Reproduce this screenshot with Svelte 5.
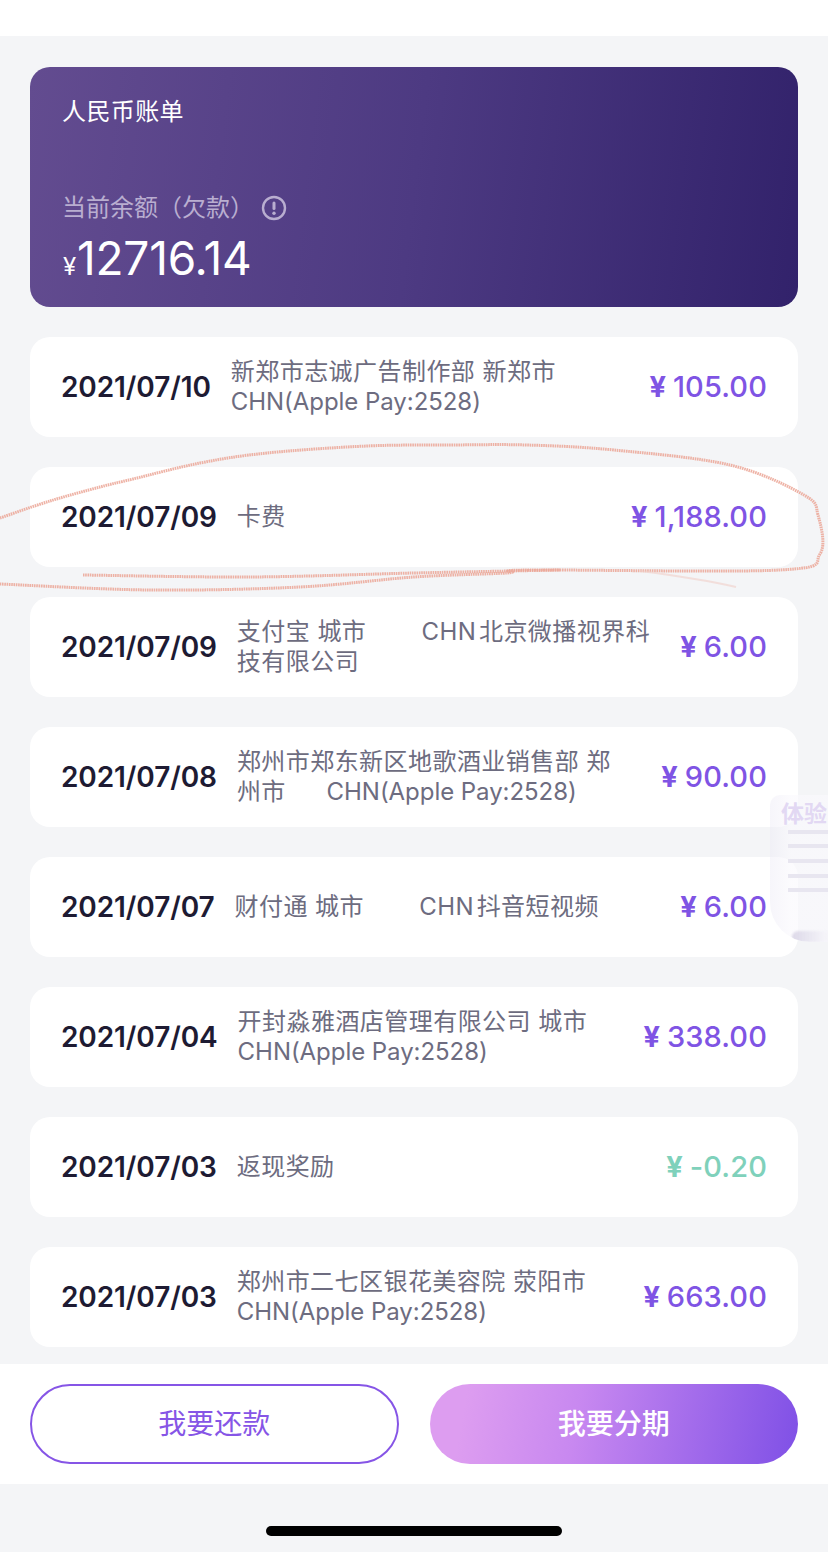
<script>
  const card = 'CHN(Apple Pay:2528)';
  const rows = [
    { date: '2021/07/10', lines: ['新郑市志诚广告制作部 新郑市', ''], card, amount: '105.00' },
    { date: '2021/07/09', lines: ['卡费'], amount: '1,188.00' },
    { date: '2021/07/09', lines: ['支付宝 城市       \u2009CHN\u200a北京微播视界科', '技有限公司'], amount: '6.00' },
    { date: '2021/07/08', lines: ['郑州市郑东新区地歌酒业销售部 郑', '州市     \u2009'], card, amount: '90.00' },
    { date: '2021/07/07', lines: ['财付通 城市       \u2009CHN\u200a抖音短视频'], amount: '6.00' },
    { date: '2021/07/04', lines: ['开封淼雅酒店管理有限公司 城市', ''], card, amount: '338.00' },
    { date: '2021/07/03', lines: ['返现奖励'], amount: '-0.20', refund: true },
    { date: '2021/07/03', lines: ['郑州市二七区银花美容院 荥阳市', ''], card, amount: '663.00' }
  ];

  // points of the pen stroke, read off the picture
  const ring = [
    [0, 88], [50, 71], [100, 57], [133, 49], [200, 33], [267, 23], [367, 16], [450, 15], [527, 15], [614, 20],
    [730, 35], [804, 65], [818, 85], [820, 124], [780, 140], [530, 140], [507, 143], [414, 147],
    [300, 157], [150, 160], [0, 154]
  ];
  const under = [[83, 145], [250, 147], [414, 143], [510, 141], [560, 140]];

  function smooth(pts) {
    let d = `M${pts[0][0]} ${pts[0][1]}`;
    for (let i = 0; i < pts.length - 1; i++) {
      const p0 = pts[i - 1] || pts[i];
      const p1 = pts[i];
      const p2 = pts[i + 1];
      const p3 = pts[i + 2] || p2;
      const c1x = p1[0] + (p2[0] - p0[0]) / 6;
      const c1y = p1[1] + (p2[1] - p0[1]) / 6;
      const c2x = p2[0] - (p3[0] - p1[0]) / 6;
      const c2y = p2[1] - (p3[1] - p1[1]) / 6;
      d += ` C${c1x} ${c1y} ${c2x} ${c2y} ${p2[0]} ${p2[1]}`;
    }
    return d;
  }
</script>

<div class="page">
  <div class="topbar"></div>

  <div class="scroll">
    <section class="card">
      <div class="card-title">人民币账单</div>
      <div class="balance-label">
        当前余额（欠款）
        <svg class="info" width="26" height="26" viewBox="0 0 26 26">
          <circle cx="13" cy="13" r="11" fill="none" stroke="currentColor" stroke-width="2.4" />
          <rect x="11.5" y="6.5" width="3" height="8.5" rx="1.5" fill="currentColor" />
          <circle cx="13" cy="18.2" r="1.7" fill="currentColor" />
        </svg>
      </div>
      <div class="balance"><span class="yen">¥</span>12716.14</div>
    </section>

    {#each rows as row}
      <div class="row">
        <div class="date">{row.date}</div>
        <div class="desc">
          {#each row.lines as line, i}
            <div class="desc-line">{line}{#if row.card && i === row.lines.length - 1}<span class="latin">{row.card}</span>{/if}</div>
          {/each}
        </div>
        <div class="amount" class:refund={row.refund}><b>¥</b> {row.amount}</div>
      </div>
    {/each}
  </div>

  <div class="actions">
    <button class="btn outline">我要还款</button>
    <button class="btn filled">我要分期</button>
  </div>

  <div class="home-area">
    <div class="home-bar"></div>
  </div>

  <!-- hand drawn circle around the card fee row -->
  <svg class="scribble" width="828" height="170" viewBox="0 0 828 170" fill="none">
    <path class="line" d={smooth(ring)} />
    <path class="line" d={smooth(under)} />
    <path class="fade" d="M640 141 C680 146 710 151 736 157" />
  </svg>

  <!-- floating feedback tab -->
  <div class="float-tab">
    <div class="tab-title">体验</div>
    <i></i><i></i><i></i><i></i><i></i>
    <div class="curl"></div>
  </div>
</div>

<style>
  :global(body) {
    margin: 0;
    background: #f4f5f7;
  }

  .page {
    position: relative;
    width: 828px;
    height: 1552px;
    overflow: hidden;
    display: flex;
    flex-direction: column;
    background: #f4f5f7;
    font-family: Inter, "Noto Sans CJK SC", sans-serif;
  }

  .topbar {
    height: 36px;
    flex: none;
    background: #fff;
  }

  .scroll {
    height: 1328px;
    flex: none;
    overflow: hidden;
    padding: 31px 30px 0;
    box-sizing: border-box;
  }

  .card {
    height: 240px;
    box-sizing: border-box;
    padding: 30px 32px 0;
    border-radius: 20px;
    background: linear-gradient(97deg, #634c90 0%, #4d3a82 50%, #32226b 100%);
    color: #fff;
  }

  .card-title {
    font-size: 24px;
    line-height: 30px;
    letter-spacing: 0.4px;
  }

  .balance-label {
    margin-top: 66px;
    display: flex;
    align-items: center;
    font-size: 24px;
    line-height: 30px;
    color: #b9aed0;
  }

  .info {
    margin-left: 7px;
  }

  .balance {
    margin-top: 7px;
    font-size: 46px;
    line-height: 56px;
    letter-spacing: -0.2px;
  }

  .yen {
    font-size: 24px;
    margin-left: 1px;
    margin-right: 1px;
  }

  .row {
    height: 100px;
    margin-top: 30px;
    box-sizing: border-box;
    padding: 0 31px;
    display: flex;
    align-items: center;
    background: #fff;
    border-radius: 20px;
  }

  .date {
    flex: none;
    font-size: 28px;
    font-weight: 600;
    letter-spacing: -0.1px;
    color: #1e1b33;
    margin-right: 20px;
  }

  .desc {
    flex: 1;
    min-width: 0;
    font-size: 24px;
    line-height: 30px;
    letter-spacing: 0.45px;
    color: #6d6c80;
  }

  .desc-line {
    white-space: pre;
  }

  .latin {
    letter-spacing: -0.05px;
  }

  .amount {
    flex: none;
    margin-left: 28px;
    padding-bottom: 2px;
    font-size: 29px;
    font-weight: 500;
    letter-spacing: 0.1px;
    word-spacing: -1px;
    color: #7f54e4;
  }

  .amount b {
    font-weight: 700;
  }

  .amount.refund {
    color: #7fd1bb;
  }

  .actions {
    height: 120px;
    flex: none;
    box-sizing: border-box;
    padding: 20px 30px;
    display: grid;
    grid-template-columns: 1fr 1fr;
    gap: 31px;
    background: #fff;
  }

  .btn {
    height: 80px;
    box-sizing: border-box;
    padding: 0 0 4px;
    border-radius: 40px;
    font-family: inherit;
    font-size: 28px;
    cursor: pointer;
  }

  .outline {
    background: #fff;
    border: 2px solid #8655e6;
    color: #8655e6;
  }

  .filled {
    border: none;
    background: linear-gradient(100deg, #dd9df0 10%, #c888f0 40%, #7f50e6 100%);
    color: #fff;
    font-weight: 500;
  }

  .home-area {
    flex: 1;
    display: flex;
    justify-content: center;
    padding-top: 42px;
  }

  .home-bar {
    width: 296px;
    height: 10px;
    border-radius: 5px;
    background: #000;
  }

  .scribble {
    position: absolute;
    left: 0;
    top: 430px;
  }

  .line {
    stroke: #eba595;
    stroke-width: 3;
    stroke-dasharray: 1.6 0.7;
    opacity: 0.85;
  }

  .fade {
    stroke: #f0cfc8;
    stroke-width: 2;
    opacity: 0.6;
  }

  .float-tab {
    position: absolute;
    left: 770px;
    top: 795px;
    width: 70px;
    height: 147px;
    box-sizing: border-box;
    padding: 6px 0 0 11px;
    border-radius: 10px 0 0 40px;
    background: linear-gradient(90deg, rgba(236, 234, 245, 0.45), rgba(250, 249, 253, 0.65) 30%);
    overflow: hidden;
  }

  .tab-title {
    font-size: 23px;
    font-weight: 700;
    line-height: 26px;
    margin-bottom: -8px;
    color: #e2d8f3;
    white-space: nowrap;
  }

  .float-tab i {
    display: block;
    height: 4px;
    margin: 10.7px 0 0 7px;
    background: #e8e6f0;
  }

  .curl {
    position: absolute;
    left: 22px;
    bottom: 0;
    width: 48px;
    height: 11px;
    border-radius: 10px 0 0 8px;
    background: linear-gradient(90deg, #dcd8e8, rgba(240, 238, 246, 0.3) 70%);
    filter: blur(1px);
  }
</style>
